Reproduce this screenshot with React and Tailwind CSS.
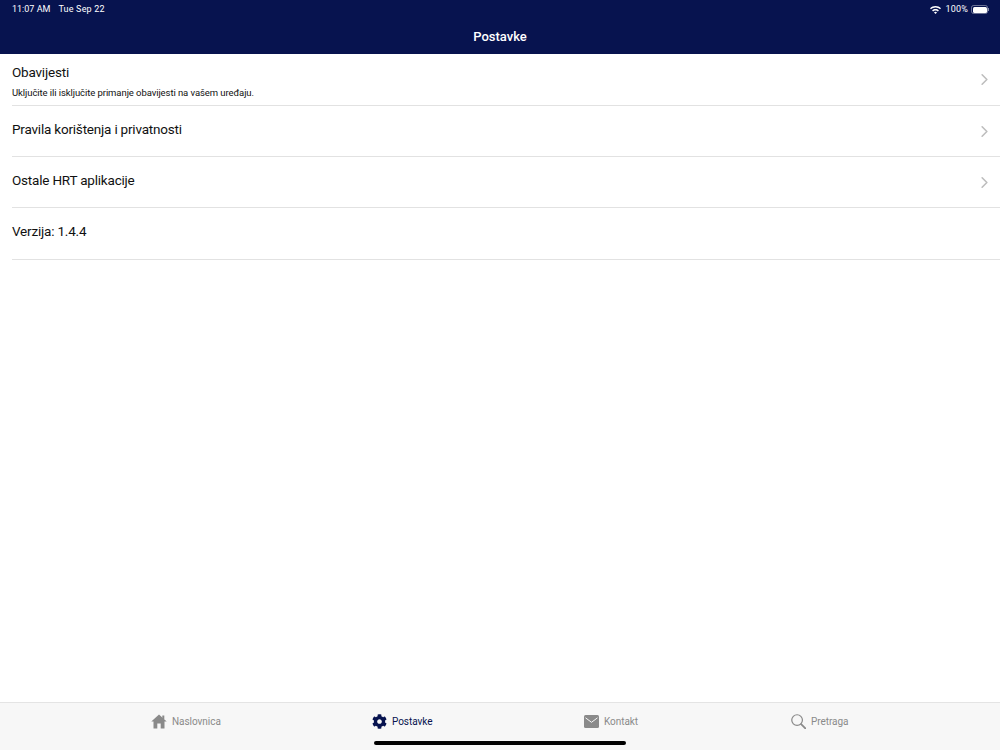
import React from 'react';
import { ChevronRight } from 'lucide-react';
import { FaCog } from 'react-icons/fa';

function HomeIcon() {
  return (
    <svg width="16" height="15" viewBox="0 0 16 15" fill="#8a8a8a" className="mr-[5px] -ml-px">
      <path d="M8 .5 L15.700 7.500 H13.500 V14.500 H9.700 V9.500 H6.300 V14.500 H2.500 V7.500 H.3 Z" />
      <rect x="11.300" y="1.500" width="2" height="3.500" />
    </svg>
  );
}

function MailIcon() {
  return (
    <svg width="15" height="13" viewBox="0 0 15 13" className="mr-[5px]">
      <rect x="0" y="0" width="15" height="13" rx="1.500" fill="#8a8a8a" />
      <path d="M1.500 2.800 L7.500 7.300 L13.500 2.800" fill="none" stroke="#f7f7f7" strokeWidth="1" />
    </svg>
  );
}

function SearchIcon() {
  return (
    <svg width="15" height="15" viewBox="0 0 16 16" fill="none" stroke="#8a8a8a" strokeWidth="1.300" className="mr-[5px]">
      <circle cx="6.500" cy="6.500" r="5.700" />
      <path d="M10.800 10.800 L15.300 15.300" strokeWidth="1.900" strokeLinecap="round" />
    </svg>
  );
}

function StatusBar() {
  return (
    <div className="h-[18px] flex items-center justify-between pl-3 pr-[11px] text-[9px] text-white pt-px">
      <div className="flex gap-[8px]">
        <span>11:07 AM</span>
        <span className="tracking-[0.2px]">Tue Sep 22</span>
      </div>
      <div className="flex items-center gap-[3px]">
        <svg width="11" height="8" viewBox="0 0 11 8" fill="white" className="mr-[1px]">
          <path d="M5.500 0C3.400 0 1.500.8 0 2.200l1 1.100C2.200 2.200 3.800 1.500 5.500 1.500s3.300.7 4.500 1.800l1-1.100C9.500.8 7.600 0 5.500 0z" />
          <path d="M5.500 3C4.200 3 3 3.500 2.100 4.400l1 1.100c.7-.6 1.500-1 2.400-1s1.700.4 2.400 1l1-1.100C8 3.500 6.800 3 5.500 3z" />
          <path d="M5.500 5.800c-.6 0-1.100.2-1.500.6L5.500 8 7 6.400c-.4-.4-.9-.6-1.500-.6z" />
        </svg>
        <span className="tracking-[0.2px]">100%</span>
        <div className="flex items-center">
          <div className="w-[17px] h-[9px] rounded-[2.500px] border border-white/40 p-[0.5px]">
            <div className="w-full h-full bg-white rounded-[1.500px]" />
          </div>
          <div className="w-px h-[3px] bg-white/50" />
        </div>
      </div>
    </div>
  );
}

function Row({ title, subtitle, chevron = true, height }) {
  return (
    <div className={`ml-3 border-b border-[#e2e2e2] relative flex flex-col ${height}`}>
      <div className={`text-[13.5px] leading-[17px] text-[#111] tracking-[-0.2px] ${subtitle ? 'pt-[10px]' : 'pt-[15px]'}`}>{title}</div>
      {subtitle && <div className="text-[9.5px] leading-[12px] text-[#111] mt-[6px] tracking-[-0.08px]">{subtitle}</div>}
      {chevron && (
        <ChevronRight className="absolute right-[6px] top-[16px] w-[19px] h-[19px] text-[#bdbdbd]" strokeWidth={2} />
      )}
    </div>
  );
}

function Tab({ icon, label, active, className }) {
  return (
    <div className={`flex items-center h-[37px] ${className}`}>
      {icon}
      <span className={`text-[10px] tracking-[-0.05px] ${active ? 'text-[#07134f]' : 'text-[#8a8a8a]'}`}>{label}</span>
    </div>
  );
}

export default function App() {
  return (
    <div className="w-[1000px] h-[750px] flex flex-col bg-white overflow-hidden relative" style={{ fontFamily: 'Roboto, "Liberation Sans", sans-serif' }}>
      <div className="h-[54px] bg-[#07134f] shrink-0">
        <StatusBar />
        <div className="text-center text-white text-[13px] font-medium leading-[16px] pt-[11px]">Postavke</div>
      </div>

      <div className="flex-1">
        <Row title="Obavijesti" subtitle="Uključite ili isključite primanje obavijesti na vašem uređaju." height="h-[52px]" />
        <Row title="Pravila korištenja i privatnosti" height="h-[51px]" />
        <Row title="Ostale HRT aplikacije" height="h-[51px]" />
        <Row title="Verzija: 1.4.4" chevron={false} height="h-[52px]" />
      </div>

      <div className="h-[48px] shrink-0 bg-[#f7f7f7] border-t border-[#e4e4e4] flex">
        <Tab className="ml-[152px] w-[220px]" icon={<HomeIcon />} label="Naslovnica" />
        <Tab className="w-[212px]" active icon={<FaCog className="w-[15px] h-[15px] text-[#07134f] mr-[5px]" />} label="Postavke" />
        <Tab className="w-[207px]" icon={<MailIcon />} label="Kontakt" />
        <Tab icon={<SearchIcon />} label="Pretraga" />
      </div>

      <div className="absolute left-[374px] bottom-[5px] w-[252px] h-[4px] rounded-full bg-black" />
    </div>
  );
}
